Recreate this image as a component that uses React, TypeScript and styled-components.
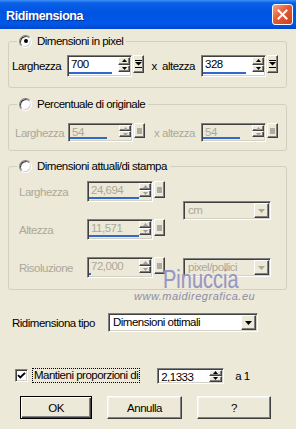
import React from 'react'
import styled, { createGlobalStyle, css } from 'styled-components'

const GlobalStyle = createGlobalStyle`
  html, body {
    margin: 0;
    padding: 0;
    background: #ece9d8;
  }
  body {
    font-family: "Liberation Sans", Arial, sans-serif;
    font-size: 11.5px;
    letter-spacing: -0.5px;
    color: #000;
  }
  * {
    box-sizing: border-box;
  }
`

const DIS = '#aca899'

const sunken = css`
  border: 1px solid;
  border-color: #808080 #fff #fff #808080;
  box-shadow: inset 1px 1px 0 #404040, inset -1px -1px 0 #d4d0c8;
  padding: 1px;
`

const raised = css`
  border: 1px solid;
  border-color: #fff #404040 #404040 #fff;
  box-shadow: inset -1px -1px 0 #808080;
  background: #ece9d8;
`

const Window = styled.div`
  position: relative;
  width: 296px;
  height: 429px;
  overflow: hidden;
  background: #ece9d8;
`

const TitleBar = styled.div`
  height: 29px;
  display: flex;
  align-items: center;
  justify-content: space-between;
  padding: 0 3px 0 6px;
  background: linear-gradient(
    180deg,
    #3d8ff7 0px,
    #0a5fe6 3px,
    #0054e3 12px,
    #0057e8 24px,
    #0046cc 29px
  );
`

const Title = styled.span`
  color: #fff;
  font-weight: bold;
  font-size: 12.5px;
  letter-spacing: -0.4px;
  padding-top: 2px;
  text-shadow: 1px 1px 0 #0a2c8c;
`

const CloseBtn = styled.div`
  width: 21px;
  height: 21px;
  border: 1px solid #fff;
  border-radius: 3px;
  background: linear-gradient(135deg, #f3a58a 0%, #e35b36 45%, #c8421a 100%);
  display: flex;
  align-items: center;
  justify-content: center;
`

const Group = styled.fieldset<{ $mt: number; $pb: number }>`
  margin: ${(p) => p.$mt}px 9px 0 8px;
  padding: 0 3px ${(p) => p.$pb}px 3px;
  border: 1px solid #d0d0bf;
  border-radius: 3px;
  min-width: 0;
`

const Legend = styled.legend`
  margin-left: 5px;
  padding: 0 3px 0 2px;
  height: 14px;
`

const LegendInner = styled.span`
  display: flex;
  align-items: center;
  gap: 5px;
  height: 14px;
  line-height: 14px;
`

const Radio = styled.span<{ $on?: boolean }>`
  width: 13px;
  height: 13px;
  border-radius: 50%;
  background: #fff;
  border: 1px solid;
  border-color: #808080 #fff #fff #808080;
  box-shadow: inset 1px 1px 0 #404040, inset -1px -1px 0 #d4d0c8;
  display: flex;
  align-items: center;
  justify-content: center;
  ${(p) =>
    p.$on &&
    css`
      &::after {
        content: '';
        width: 4px;
        height: 4px;
        border-radius: 50%;
        background: #000;
      }
    `}
`

const FieldRow = styled.div<{ $mt: number }>`
  display: flex;
  align-items: center;
  margin-top: ${(p) => p.$mt}px;
`

const RowLabel = styled.span<{ $w: number; $pl?: number; $dis?: boolean }>`
  width: ${(p) => p.$w}px;
  padding-left: ${(p) => p.$pl || 0}px;
  color: ${(p) => (p.$dis ? DIS : '#000')};
  white-space: pre;
`

const MidLabel = styled.span<{ $w: number; $dis?: boolean }>`
  width: ${(p) => p.$w}px;
  text-align: right;
  padding-right: 6px;
  color: ${(p) => (p.$dis ? DIS : '#000')};
  white-space: pre;
`

const NumWrap = styled.div`
  display: flex;
  align-items: flex-start;
  gap: 1px;
`

const Field = styled.div<{ $w: number; $h: number; $dis?: boolean; $bar?: boolean }>`
  ${sunken};
  width: ${(p) => p.$w}px;
  height: ${(p) => p.$h}px;
  background: ${(p) => (p.$dis ? '#ece9d8' : '#fff')};
  display: grid;
  grid-template-columns: 1fr 12px;
  grid-template-rows: 1fr ${(p) => (p.$bar ? '3px' : '0px')};
`

const Value = styled.span<{ $dis?: boolean }>`
  padding: 1px 0 0 2px;
  line-height: 13px;
  color: ${(p) => (p.$dis ? DIS : '#000')};
  overflow: hidden;
`

const Bar = styled.div`
  grid-column: 1;
  grid-row: 2;
  height: 2px;
`

const BarFill = styled.div`
  height: 2px;
  background: #3169c6;
`

const Spinner = styled.div`
  grid-column: 2;
  grid-row: 1;
  display: flex;
  flex-direction: column;
`

const SpinBtn = styled.div`
  ${raised};
  flex: 1;
  display: flex;
  align-items: center;
  justify-content: center;
`

const SlideBtn = styled.div<{ $h: number }>`
  ${raised};
  width: 11px;
  height: ${(p) => p.$h}px;
  display: flex;
  align-items: center;
  justify-content: center;
`

const Grid = styled.div`
  display: grid;
  grid-template-columns: 75px 96px 88px;
  grid-template-rows: repeat(3, 21px);
  row-gap: 17px;
  align-items: center;
  margin-top: 8px;
`

const Combo = styled.div<{ $w: number; $dis?: boolean; $row?: string }>`
  ${sunken};
  width: ${(p) => p.$w}px;
  height: 19px;
  display: flex;
  align-items: stretch;
  background: ${(p) => (p.$dis ? '#ece9d8' : '#fff')};
  grid-column: 3;
  grid-row: ${(p) => p.$row || 'auto'};
  align-self: center;
`

const ComboText = styled.span<{ $dis?: boolean }>`
  flex: 1;
  padding-left: 3px;
  line-height: 15px;
  color: ${(p) => (p.$dis ? DIS : '#000')};
  white-space: nowrap;
  overflow: hidden;
`

const ComboBtn = styled.span`
  ${raised};
  width: 15px;
  display: flex;
  align-items: center;
  justify-content: center;
`

const TypeRow = styled.div`
  display: flex;
  align-items: center;
  margin: 23px 0 0 12px;
`

const CheckRow = styled.div`
  display: flex;
  align-items: center;
  margin: 36px 0 0 15px;
  height: 15px;
`

const CheckBox = styled.span`
  ${sunken};
  width: 13px;
  height: 13px;
  background: #fff;
  display: flex;
  align-items: center;
  justify-content: center;
  padding: 0;
`

const FocusLabel = styled.span`
  margin-left: 4px;
  padding: 0 1px;
  height: 15px;
  line-height: 13px;
  border: 1px dotted #000;
`

const SmallField = styled.div`
  ${sunken};
  margin-left: 17px;
  width: 67px;
  height: 16px;
  background: #fff;
  display: flex;
`

const SmallSpin = styled.div`
  width: 13px;
  display: flex;
  flex-direction: column;
`

const After = styled.span`
  margin-left: 11px;
`

const ButtonRow = styled.div`
  display: flex;
  gap: 15px;
  margin: 13px 0 0 20px;
`

const Button = styled.div<{ $w: number; $default?: boolean }>`
  width: ${(p) => p.$w}px;
  height: 23px;
  display: flex;
  align-items: center;
  justify-content: center;
  background: #ece9d8;
  ${(p) =>
    p.$default
      ? css`
          border: 1px solid #000;
          box-shadow: inset 1px 1px 0 #fff, inset -1px -1px 0 #404040, inset -2px -2px 0 #808080;
        `
      : css`
          border: 1px solid;
          border-color: #fff #404040 #404040 #fff;
          box-shadow: inset -1px -1px 0 #808080, inset 1px 1px 0 #f5f4ee;
        `}
`

const Mark = styled.div`
  position: absolute;
  left: 163px;
  top: 265px;
  font-family: "Liberation Sans", Arial, sans-serif;
  font-size: 25px;
  letter-spacing: 0;
  color: #9a96bd;
  transform: scaleX(0.8);
  transform-origin: left top;
  text-shadow: 0 0 1px #d8d6e6;
  pointer-events: none;
`

const MarkUrl = styled.div`
  position: absolute;
  left: 134px;
  top: 290px;
  font-family: "Liberation Sans", Arial, sans-serif;
  font-style: italic;
  font-size: 11px;
  letter-spacing: 0.5px;
  color: #8e8ca6;
  pointer-events: none;
`

function Tri({ up, dis }: { up?: boolean; dis?: boolean }) {
  return (
    <svg width="5" height="3" viewBox="0 0 5 3">
      <path d={up ? 'M2.5 0L5 3H0z' : 'M0 0h5L2.5 3z'} fill={dis ? '#a0a0a0' : '#000'} />
    </svg>
  )
}

function SlideGlyph({ dis }: { dis?: boolean }) {
  if (dis)
    return (
      <svg width="5" height="6" viewBox="0 0 5 6">
        <rect width="5" height="6" fill="#b0ada0" />
      </svg>
    )
  return (
    <svg width="7" height="8" viewBox="0 0 7 8">
      <rect x="0" y="0" width="7" height="1" fill="#000" />
      <path d="M0 2h7L3.5 5.5z" fill="#000" />
      <rect x="0" y="7" width="7" height="1" fill="#000" />
    </svg>
  )
}

function NumField({
  value,
  fill,
  h,
  w = 65,
  dis
}: {
  value: string
  fill: number
  h: number
  w?: number
  dis?: boolean
}) {
  return (
    <NumWrap>
      <Field $w={w} $h={h} $dis={dis} $bar>
        <Value $dis={dis}>{value}</Value>
        <Spinner>
          <SpinBtn>
            <Tri up dis={dis} />
          </SpinBtn>
          <SpinBtn>
            <Tri dis={dis} />
          </SpinBtn>
        </Spinner>
        <Bar>
          <BarFill style={{ width: `${fill * 100}%` }} />
        </Bar>
      </Field>
      <SlideBtn $h={h - 4}>
        <SlideGlyph dis={dis} />
      </SlideBtn>
    </NumWrap>
  )
}

function ComboBox({ text, w, dis, row }: { text: string; w: number; dis?: boolean; row?: string }) {
  return (
    <Combo $w={w} $dis={dis} $row={row}>
      <ComboText $dis={dis}>{text}</ComboText>
      <ComboBtn>
        <svg width="7" height="4" viewBox="0 0 7 4">
          <path d="M0 0h7L3.5 4z" fill={dis ? '#aca899' : '#000'} />
        </svg>
      </ComboBtn>
    </Combo>
  )
}

export default function App() {
  return (
    <>
      <GlobalStyle />
      <Window>
        <TitleBar>
          <Title>Ridimensiona</Title>
          <CloseBtn>
            <svg width="11" height="11" viewBox="0 0 11 11">
              <path d="M1.5 1.5l8 8M9.5 1.5l-8 8" stroke="#fff" strokeWidth="2" strokeLinecap="square" />
            </svg>
          </CloseBtn>
        </TitleBar>

        <Group $mt={5} $pb={10}>
          <Legend>
            <LegendInner>
              <Radio $on />
              Dimensioni in pixel
            </LegendInner>
          </Legend>
          <FieldRow $mt={7}>
            <RowLabel $w={55}>Larghezza</RowLabel>
            <NumField value="700" fill={0.88} h={22} />
            <MidLabel $w={57}>x  altezza</MidLabel>
            <NumField value="328" fill={0.88} h={22} />
          </FieldRow>
        </Group>

        <Group $mt={9} $pb={8}>
          <Legend>
            <LegendInner>
              <Radio />
              Percentuale di originale
            </LegendInner>
          </Legend>
          <FieldRow $mt={12}>
            <RowLabel $w={56} $pl={3} $dis>
              Larghezza
            </RowLabel>
            <NumField value="54" fill={0.76} h={19} dis />
            <MidLabel $w={56} $dis>
              x altezza
            </MidLabel>
            <NumField value="54" fill={0.76} h={19} dis />
          </FieldRow>
        </Group>

        <Group $mt={8} $pb={11}>
          <Legend>
            <LegendInner>
              <Radio />
              Dimensioni attuali/di stampa
            </LegendInner>
          </Legend>
          <Grid>
            <RowLabel $w={75} $pl={7} $dis>
              Larghezza
            </RowLabel>
            <NumField value="24,694" fill={1} h={21} w={66} dis />
            <ComboBox text="cm" w={88} dis row="1 / 3" />
            <RowLabel $w={75} $pl={7} $dis>
              Altezza
            </RowLabel>
            <NumField value="11,571" fill={1} h={21} w={66} dis />
            <RowLabel $w={75} $pl={7} $dis>
              Risoluzione
            </RowLabel>
            <NumField value="72,000" fill={0.03} h={21} w={66} dis />
            <ComboBox text="pixel/pollici" w={88} dis row="3" />
          </Grid>
        </Group>

        <TypeRow>
          <RowLabel $w={96}>Ridimensiona tipo</RowLabel>
          <Combo $w={150}>
            <ComboText>Dimensioni ottimali</ComboText>
            <ComboBtn>
              <svg width="7" height="4" viewBox="0 0 7 4">
                <path d="M0 0h7L3.5 4z" fill="#000" />
              </svg>
            </ComboBtn>
          </Combo>
        </TypeRow>

        <CheckRow>
          <CheckBox>
            <svg width="9" height="9" viewBox="0 0 9 9">
              <path d="M1 4.2l2.3 2.3L8 1.8" stroke="#000" strokeWidth="1.9" fill="none" />
            </svg>
          </CheckBox>
          <FocusLabel>Mantieni proporzioni di</FocusLabel>
          <SmallField>
            <Value style={{ flex: 1 }}>2,1333</Value>
            <SmallSpin>
              <SpinBtn>
                <Tri up />
              </SpinBtn>
              <SpinBtn>
                <Tri />
              </SpinBtn>
            </SmallSpin>
          </SmallField>
          <After>a 1</After>
        </CheckRow>

        <ButtonRow>
          <Button $w={72} $default>
            OK
          </Button>
          <Button $w={75}>Annulla</Button>
          <Button $w={74}>?</Button>
        </ButtonRow>

        <Mark>Pinuccia</Mark>
        <MarkUrl>www.maidiregrafica.eu</MarkUrl>
      </Window>
    </>
  )
}
